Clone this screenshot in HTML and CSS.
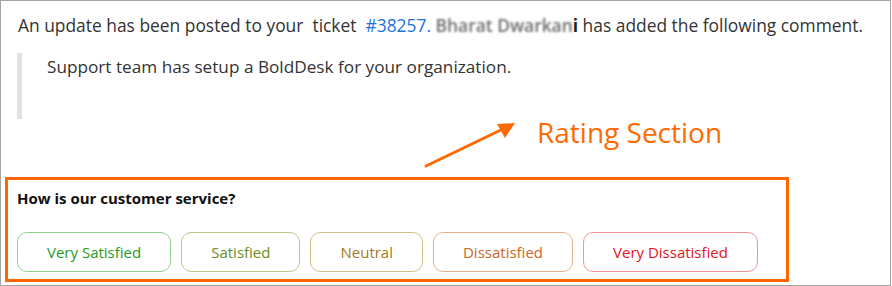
FILE: index.html
```html
<!DOCTYPE html>
<html lang="en">
<head>
  <meta charset="UTF-8" />
  <title>Ticket update</title>
  <link rel="stylesheet" href="styles.css">
</head>
<body>

<div class="frame">

  <!-- Update line -->
  <p class="update">An update has been posted to your&nbsp; ticket&nbsp; <a class="ticket" href="#">#38257.</a> <span class="agent"><span class="blurred">Bharat Dwarkan</span><b>i</b></span> has added the following comment.</p>

  <!-- Comment -->
  <div class="comment">
    <p>Support team has setup a BoldDesk for your organization.</p>
  </div>

  <!-- Annotation -->
  <div class="callout">
    <svg class="arrow" width="100" height="52" viewBox="0 0 100 52">
      <line x1="5" y1="47" x2="84" y2="9" stroke="#ff6a00" stroke-width="3" stroke-linecap="round"/>
      <polygon points="94,4 76,5 84,19" fill="#ff6a00"/>
    </svg>
    <span class="callout-label">Rating Section</span>
  </div>

  <!-- Rating -->
  <div class="rating">
    <h3>How is our customer service?</h3>
    <div class="options">
      <button class="opt very-satisfied">Very Satisfied</button>
      <button class="opt satisfied">Satisfied</button>
      <button class="opt neutral">Neutral</button>
      <button class="opt dissatisfied">Dissatisfied</button>
      <button class="opt very-dissatisfied">Very Dissatisfied</button>
    </div>
  </div>

</div>

</body>
</html>
```

FILE: styles.css
```css
body {
  margin: 0;
  background: white;
  font-family: "Open Sans", "Noto Sans", sans-serif;
}

.frame {
  box-sizing: border-box;
  width: 891px;
  height: 286px;
  border: 1px solid #a3a3a3;
  padding: 14px 0 0 4px;
  overflow: hidden;
}

/* Update line */
.update {
  margin: 0 0 0 13px;
  font-size: 17.4px;
  line-height: 20px;
  color: #333;
  white-space: nowrap;
}

.ticket {
  color: #1a73d9;
  text-decoration: none;
}

.blurred {
  color: #6e6e6e;
  font-weight: 600;
  filter: blur(1.2px);
}

.agent b {
  color: #222;
}

/* Comment */
.comment {
  margin: 18px 0 0 12px;
  height: 66px;
  box-sizing: border-box;
  border-left: 5px solid #e2e2e2;
  padding: 4px 0 0 25px;
}

.comment p {
  margin: 0;
  font-size: 17.2px;
  line-height: 20px;
  color: #333;
}

/* Annotation */
.callout {
  height: 58px;
  display: flex;
  align-items: flex-start;
  padding-left: 416px;
}

.callout-label {
  margin: -4px 0 0 16px;
  font-size: 28px;
  line-height: 34px;
  color: #ff6a00;
}

/* Rating */
.rating {
  width: 784px;
  box-sizing: border-box;
  border: 3px solid #ff6600;
  padding: 8px 0 7px 9px;
}

.rating h3 {
  margin: 0;
  font-size: 15px;
  line-height: 20px;
  font-weight: 700;
  color: #111;
}

.options {
  margin-top: 24px;
  display: flex;
  gap: 10px;
}

.opt {
  height: 40px;
  padding: 0 29px;
  background: white;
  border: 1px solid;
  border-radius: 10px;
  font-family: inherit;
  font-size: 15px;
  cursor: pointer;
}

.very-satisfied { color: #1f9a1f; border-color: #93cf93; }
.satisfied { color: #6b8e23; border-color: #b8cb8f; }
.neutral { color: #a57b1c; border-color: #d6bd8e; }
.dissatisfied { color: #c9672a; border-color: #e8b18c; }
.very-dissatisfied { color: #e5141c; border-color: #f29494; }
```
